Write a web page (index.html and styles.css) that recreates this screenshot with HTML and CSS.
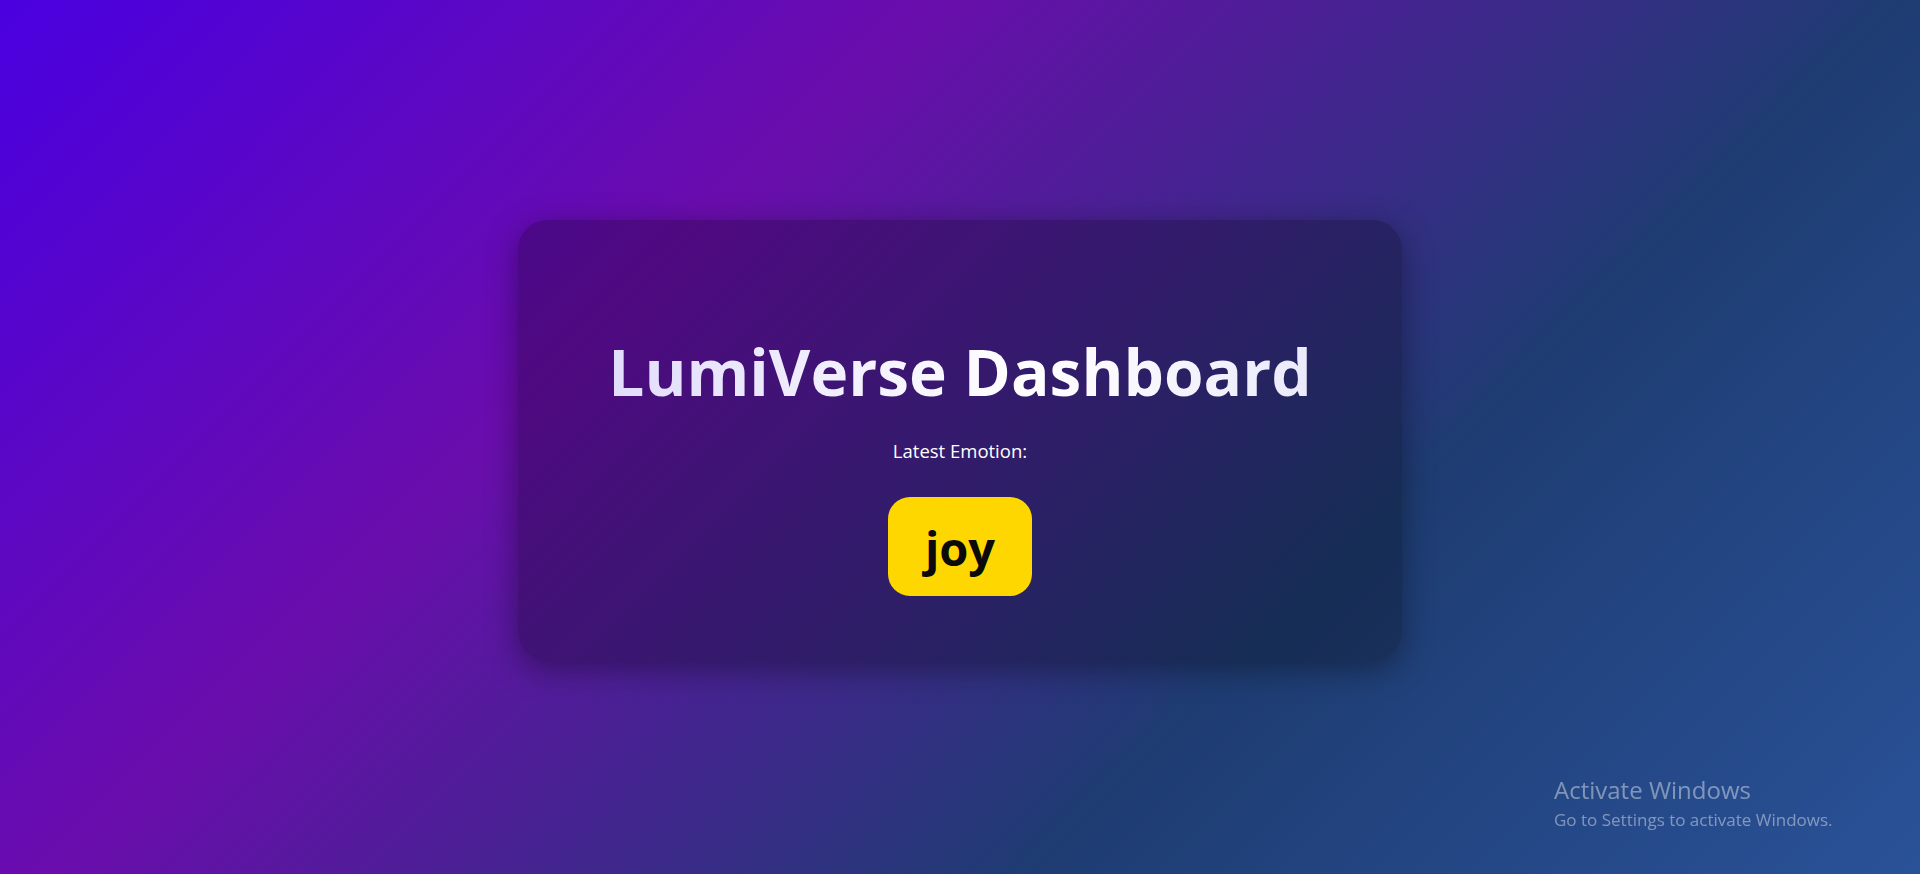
FILE: index.html
```html
<!DOCTYPE html>
<html lang="en">
<head>
<meta charset="utf-8">
<title>LumiVerse Dashboard</title>
<link rel="stylesheet" href="styles.css">
</head>
<body>
<main class="page">
  <section class="card">
    <h1 class="title">LumiVerse Dashboard</h1>
    <p class="label">Latest Emotion:</p>
    <div class="emotion">joy</div>
  </section>
</main>
<div class="watermark">
  <div class="wm-title">Activate Windows</div>
  <div class="wm-sub">Go to Settings to activate Windows.</div>
</div>
</body>
</html>
```

FILE: styles.css
```css
html, body {
  margin: 0;
  padding: 0;
  height: 100%;
}
body {
  font-family: "Open Sans", "Noto Sans", "Liberation Sans", sans-serif;
  background: linear-gradient(135deg, #4a00e0 0%, #6a0dad 33%, #1e3c72 68%, #2a5298 100%);
  color: #fff;
  overflow: hidden;
}
.page {
  height: 100vh;
  display: flex;
  align-items: center;
  justify-content: center;
}
.card {
  width: 884px;
  height: 441px;
  box-sizing: border-box;
  margin-top: 6px;
  border-radius: 30px;
  background: rgba(0, 0, 0, 0.25);
  box-shadow: 0 8px 32px rgba(0, 0, 0, 0.37);
  display: flex;
  flex-direction: column;
  align-items: center;
  padding-top: 110px;
}
.title {
  margin: 0;
  font-size: 64px;
  font-weight: 700;
  line-height: 84px;
  letter-spacing: 0;
  background: linear-gradient(90deg, #e2dcfb 0%, #ffffff 60%, #ebeafb 100%);
  -webkit-background-clip: text;
  background-clip: text;
  color: transparent;
}
.label {
  margin: 24px 0 0;
  font-size: 18.5px;
  line-height: 26px;
}
.emotion {
  margin-top: 33px;
  width: 144px;
  height: 99px;
  border-radius: 22px;
  background: #ffd700;
  color: #0a0a0a;
  font-size: 47px;
  font-weight: 700;
  display: flex;
  align-items: center;
  justify-content: center;
  box-sizing: border-box;
  padding-top: 4px;
}
.watermark {
  position: fixed;
  left: 1554px;
  top: 773px;
  color: rgba(255, 255, 255, 0.42);
  font-family: "Open Sans", "Noto Sans", sans-serif;
}
.wm-title {
  font-size: 24px;
  line-height: 34px;
}
.wm-sub {
  font-size: 17px;
  line-height: 26px;
}
```
